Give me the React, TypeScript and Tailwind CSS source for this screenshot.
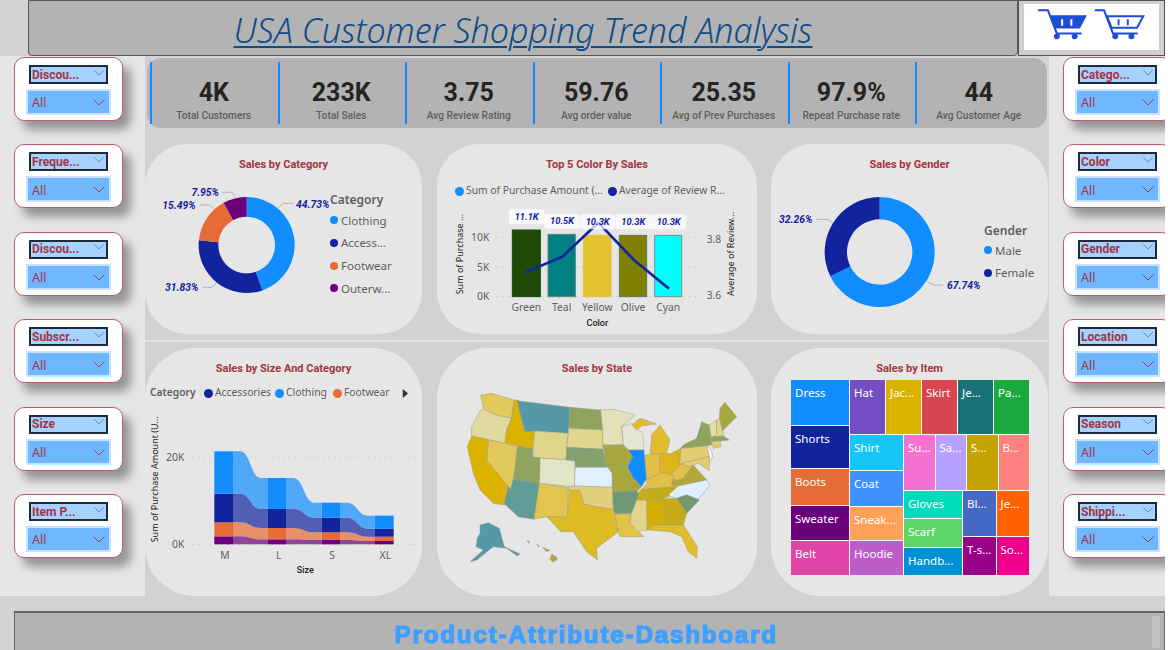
const din = "font-['Roboto',sans-serif]"
const segoe = "font-['Noto_Sans',sans-serif]"

const leftSlicers = ['Discou...', 'Freque...', 'Discou...', 'Subscr...', 'Size', 'Item P...']
const rightSlicers = ['Catego...', 'Color', 'Gender', 'Location', 'Season', 'Shippi...']

const kpis = [
  { value: '4K', label: 'Total Customers' },
  { value: '233K', label: 'Total Sales' },
  { value: '3.75', label: 'Avg Review Rating' },
  { value: '59.76', label: 'Avg order value' },
  { value: '25.35', label: 'Avg of Prev Purchases' },
  { value: '97.9%', label: 'Repeat Purchase rate' },
  { value: '44', label: 'Avg Customer Age' },
]

// donut segment, angles in percent clockwise from 12 o'clock
function arc(cx: number, cy: number, R: number, r: number, from: number, to: number) {
  const a0 = (from / 100) * Math.PI * 2 - Math.PI / 2
  const a1 = (to / 100) * Math.PI * 2 - Math.PI / 2
  const large = to - from > 50 ? 1 : 0
  const p = (rad: number, a: number) => `${cx + rad * Math.cos(a)} ${cy + rad * Math.sin(a)}`
  return `M${p(R, a0)} A${R} ${R} 0 ${large} 1 ${p(R, a1)} L${p(r, a1)} A${r} ${r} 0 ${large} 0 ${p(r, a0)} Z`
}

function Chevron({ className }: { className: string }) {
  return (
    <svg viewBox="0 0 12 7" className={className}>
      <path d="M0.5 0.5 L6 6 L11.5 0.5" fill="none" stroke="currentColor" strokeWidth="0.9" />
    </svg>
  )
}

function Slicer({ name }: { name: string }) {
  return (
    <div className="w-[109px] h-[64px] shrink-0 bg-white border border-[#b9606b] rounded-[10px] shadow-[8px_9px_10px_rgba(0,0,0,0.35)] flex flex-col items-center">
      <div className="w-[79px] h-[19px] mt-[7px] bg-[#a6d2ff] border-2 border-[#1f2a3a] flex items-center justify-between pl-px pr-[2px]">
        <span className={`${din} text-[12px] leading-none font-bold text-[#a4343f]`}>{name}</span>
        <Chevron className="w-[10px] h-[6px] text-[#5f6b78] -mt-[4px]" />
      </div>
      <div className="w-[85px] h-[26px] mt-[5px] bg-[#6fb8ff] border-2 border-[#c9e2ff] flex items-center justify-between pl-[4px] pr-[4px]">
        <span className={`${segoe} text-[12.5px] leading-none text-[#a4343f] mt-[3px]`}>All</span>
        <Chevron className="w-[12px] h-[7px] text-[#a4343f] mt-[1px]" />
      </div>
    </div>
  )
}

function Title({ children }: { children: string }) {
  return (
    <div className={`${din} h-[31px] pt-[15px] text-center text-[11px] leading-[12px] font-bold text-[#a4343f]`}>
      {children}
    </div>
  )
}

function LegendDot({ color, label }: { color: string; label: string }) {
  return (
    <div className="h-[22.7px] flex items-center gap-[3px]">
      <span className={`w-[8px] h-[8px] rounded-full ${color}`} />
      <span className={`${segoe} text-[11.5px] text-[#605e5c]`}>{label}</span>
    </div>
  )
}

function CartLogo() {
  return (
    <svg viewBox="765 15 340 100" className="w-[113px] h-[33px]">
      <g fill="none" stroke="#1c4fd6" strokeWidth="6">
        <path d="M773 25 H803 L830 95 H905" />
        <path d="M945 25 H973 L1000 95 H1075" />
        <path d="M982 43 H1092 L1073 78 H996 Z" />
      </g>
      <path d="M808 40 H921 L900 80 H824 Z" fill="#1c4fd6" />
      <g stroke="#fff" strokeWidth="6">
        <path d="M846 52 V72 M874 52 V72" />
      </g>
      <g stroke="#1c4fd6" strokeWidth="6">
        <path d="M1017 52 V70 M1045 52 V70" />
      </g>
      <g fill="#1c4fd6">
        <circle cx="830" cy="104" r="9" />
        <circle cx="884" cy="104" r="9" />
        <circle cx="1007" cy="104" r="9" />
        <circle cx="1056" cy="104" r="9" />
      </g>
    </svg>
  )
}

function CategoryDonut() {
  const labelClass = `${din} text-[31px] font-bold italic fill-[#12239e]`
  return (
    <svg viewBox="0 105 555 477" className="w-[185px] h-[159px] shrink-0">
      <path d={arc(305, 315, 144, 85, 0, 44.73)} fill="#118dff" />
      <path d={arc(305, 315, 144, 85, 44.73, 76.56)} fill="#12239e" />
      <path d={arc(305, 315, 144, 85, 76.56, 92.05)} fill="#e66c37" />
      <path d={arc(305, 315, 144, 85, 92.05, 100)} fill="#6b007b" />
      <g fill="none" stroke="#b5b5b5" strokeWidth="3">
        <path d="M400 203 L415 190 H445" />
        <path d="M232 157 H262 L270 172" />
        <path d="M163 195 H195 L207 207" />
        <path d="M172 442 H200 L213 430" />
      </g>
      <text x="453" y="203" className={labelClass}>44.73%</text>
      <text x="222" y="167" textAnchor="end" className={labelClass}>7.95%</text>
      <text x="152" y="207" textAnchor="end" className={labelClass}>15.49%</text>
      <text x="160" y="452" textAnchor="end" className={labelClass}>31.83%</text>
    </svg>
  )
}

function GenderDonut() {
  const labelClass = `${din} text-[31px] font-bold italic fill-[#12239e]`
  return (
    <svg viewBox="9 105 630 477" className="w-[210px] h-[159px] shrink-0">
      <path d={arc(335, 336, 165, 98, 0, 67.74)} fill="#118dff" />
      <path d={arc(335, 336, 165, 98, 67.74, 100)} fill="#12239e" />
      <g fill="none" stroke="#b5b5b5" strokeWidth="3">
        <path d="M145 238 H180 L195 250" />
        <path d="M478 425 L495 435 H525" />
      </g>
      <text x="133" y="248" textAnchor="end" className={labelClass}>32.26%</text>
      <text x="537" y="447" className={labelClass}>67.74%</text>
    </svg>
  )
}

const bars = [
  { name: 'Green', x: 232, w: 84, top: 270, fill: '#1f4a05', stroke: '#1f4a05', value: '11.1K', lx: 275, ly: 230 },
  { name: 'Teal', x: 339, w: 82, top: 283, fill: '#008080', stroke: '#6f7f7f', value: '10.5K', lx: 381, ly: 243 },
  { name: 'Yellow', x: 446, w: 82, top: 286, fill: '#e3c130', stroke: '#e3c130', value: '10.3K', lx: 488, ly: 245 },
  { name: 'Olive', x: 553, w: 82, top: 286, fill: '#808000', stroke: '#6f6f5f', value: '10.3K', lx: 595, ly: 245 },
  { name: 'Cyan', x: 659, w: 81, top: 286, fill: '#00ffff', stroke: '#6f8f8f', value: '10.3K', lx: 701, ly: 245 },
]

function ColorChart() {
  const tick = `${segoe} text-[31px] fill-[#605e5c]`
  return (
    <svg viewBox="6 171 960 411" className="w-[320px] h-[137px]">
      <g stroke="#bdbdbd" strokeWidth="3" strokeDasharray="3 14">
        <path d="M185 292 H790 M185 381 H790 M185 470 H790" />
      </g>
      <text x="163" y="303" textAnchor="end" className={tick}>10K</text>
      <text x="163" y="392" textAnchor="end" className={tick}>5K</text>
      <text x="163" y="480" textAnchor="end" className={tick}>0K</text>
      <text x="815" y="308" className={tick}>3.8</text>
      <text x="815" y="478" className={tick}>3.6</text>
      <text transform="translate(84 463) rotate(-90)" className={`${segoe} text-[27px] fill-[#252423]`}>Sum of Purchase ...</text>
      <text transform="translate(897 468) rotate(-90)" className={`${segoe} text-[27px] fill-[#252423]`}>Average of Review...</text>
      {bars.map((b) => (
        <g key={b.name}>
          <rect x={b.x} y={b.top} width={b.w} height={470 - b.top} fill={b.fill} stroke={b.stroke} strokeWidth="3" />
          <text x={b.x + b.w / 2} y="512" textAnchor="middle" className={tick}>{b.name}</text>
        </g>
      ))}
      <polyline points="272,397 382,350 490,248 597,360 702,446" fill="none" stroke="#12239e" strokeWidth="8" />
      {bars.map((b) => (
        <g key={b.value + b.name}>
          <rect x={b.lx - 53} y={b.ly - 22} width="106" height="45" rx="8" fill="#fff" fillOpacity="0.75" />
          <text x={b.lx} y={b.ly + 10} textAnchor="middle" className={`${din} text-[28px] font-bold italic fill-[#12239e]`}>{b.value}</text>
        </g>
      ))}
      <text x="487" y="557" textAnchor="middle" className={`${din} text-[27px] font-medium fill-[#252423]`}>Color</text>
    </svg>
  )
}

const columns = [
  { x0: 208, x1: 264 },
  { x0: 369, x1: 423 },
  { x0: 530, x1: 585 },
  { x0: 690, x1: 746 },
]

// y of every layer boundary at M, L, S, XL
const layers = [
  { color: '#6b007b', top: [574, 583, 585, 588], bottom: [598, 598, 598, 598] },
  { color: '#e66c37', top: [532, 549, 562, 575], bottom: [574, 583, 585, 588] },
  { color: '#12239e', top: [446, 492, 518, 551], bottom: [532, 549, 562, 575] },
  { color: '#118dff', top: [319, 399, 473, 512], bottom: [446, 492, 518, 551] },
]

// flat for a fifth of the span at both ends, s-curve between
function ribbon(x0: number, x1: number, t0: number, t1: number, b0: number, b1: number) {
  const a = x0 + (x1 - x0) * 0.2
  const z = x1 - (x1 - x0) * 0.2
  const m = (x0 + x1) / 2
  return `M${x0} ${t0} H${a} C${m} ${t0} ${m} ${t1} ${z} ${t1} H${x1} V${b1} H${z} C${m} ${b1} ${m} ${b0} ${a} ${b0} H${x0} Z`
}

function SizeChart() {
  const tick = `${segoe} text-[31px] fill-[#605e5c]`
  return (
    <svg viewBox="0 180 831 573" className="w-[277px] h-[191px]">
      <g stroke="#bdbdbd" strokeWidth="3" strokeDasharray="3 14">
        <path d="M143 338 H820 M143 598 H820" />
      </g>
      <text x="118" y="349" textAnchor="end" className={tick}>20K</text>
      <text x="118" y="609" textAnchor="end" className={tick}>0K</text>
      <text transform="translate(40 592) rotate(-90)" className={`${segoe} text-[27px] fill-[#252423]`}>Sum of Purchase Amount (U...</text>
      {layers.map((l) => (
        <g key={l.color} fill={l.color}>
          {columns.map((c, i) => (
            <rect key={c.x0} x={c.x0} y={l.top[i]} width={c.x1 - c.x0} height={l.bottom[i] - l.top[i]} />
          ))}
          {columns.slice(0, 3).map((c, i) => (
            <path
              key={c.x1}
              d={ribbon(c.x1, columns[i + 1].x0, l.top[i], l.top[i + 1], l.bottom[i], l.bottom[i + 1])}
              fillOpacity="0.7"
            />
          ))}
        </g>
      ))}
      {['M', 'L', 'S', 'XL'].map((s, i) => (
        <text key={s} x={[240, 401, 561, 721][i]} y="641" textAnchor="middle" className={tick}>{s}</text>
      ))}
      <text x="481" y="683" textAnchor="middle" className={`${din} text-[27px] font-medium fill-[#252423]`}>Size</text>
    </svg>
  )
}

const states = [
  { f: '#e3c95b', p: '122,135 155,130 222,150 215,205 175,197 130,178' }, // WA
  { f: '#e0d9a0', p: '122,180 130,178 175,197 215,205 200,240 195,280 95,258 95,230' }, // OR
  { f: '#dcb200', p: '222,150 235,150 240,190 255,245 284,243 278,297 195,280 200,240 215,205' }, // ID
  { f: '#5598a8', p: '232,152 390,172 385,250 284,243 255,245 240,190' }, // MT
  { f: '#dfd68c', p: '284,243 385,250 378,330 300,324 278,321' }, // WY
  { f: '#8fa45e', p: '390,172 482,180 488,240 386,235' }, // ND
  { f: '#e0d690', p: '386,235 488,240 488,298 380,292 385,250' }, // SD
  { f: '#83a270', p: '380,292 488,298 502,352 405,352 405,333 378,330' }, // NE
  { f: '#e3e0ba', p: '482,180 520,178 585,195 545,230 550,285 488,285 488,240' }, // MN
  { f: '#e3e6d5', p: '545,230 575,220 608,250 612,300 565,300 550,285' }, // WI
  { f: '#a6a83f', p: '488,285 550,285 565,300 578,320 565,345 500,345' }, // IA
  { f: '#118dff', p: '565,300 612,300 620,385 605,410 580,385 562,350 578,320' }, // IL
  { f: '#a6a83f', p: '500,345 565,345 562,350 580,385 605,410 590,425 518,425 516,370' }, // MO
  { f: '#e0f0ff', p: '405,352 502,352 516,370 516,412 403,408' }, // KS
  { f: '#e3e5c8', p: '300,324 378,330 405,333 403,410 298,400' }, // CO
  { f: '#8fa45e', p: '232,288 278,297 278,321 300,324 298,400 220,388' }, // UT
  { f: '#e3c95b', p: '145,270 195,280 232,288 220,388 212,418 205,410 140,330' }, // NV
  { f: '#dcb200', p: '95,258 145,270 140,330 205,410 195,465 160,460 120,420 100,370 82,290' }, // CA
  { f: '#5f9c96', p: '220,388 298,400 282,508 235,500 192,460 205,410 212,418' }, // AZ
  { f: '#e2c54e', p: '298,400 385,412 382,502 320,500 282,508' }, // NM
  { f: '#deba25', p: '388,420 420,422 432,462 470,470 520,478 525,492 535,545 470,595 472,630 440,605 400,545 362,545 325,505 320,500 382,502' }, // TX
  { f: '#e3d07f', p: '385,412 403,408 516,412 518,425 520,478 470,470 432,462 420,422 388,420' }, // OK
  { f: '#6f9878', p: '518,425 590,423 597,432 575,490 525,492 520,478' }, // AR
  { f: '#e2c346', p: '525,492 572,492 570,520 612,560 540,560 535,545' }, // LA
  { f: '#e3d58c', p: '590,450 620,450 622,540 590,545 570,515 575,490' }, // MS
  { f: '#d3ae05', p: '620,450 668,447 680,525 640,525 625,540 622,540' }, // AL
  { f: '#c5ac18', p: '597,425 605,418 715,408 690,438 668,447 620,450 590,450' }, // TN
  { f: '#e3c146', p: '605,418 620,400 618,390 660,368 695,372 700,385 695,405 715,408' }, // KY
  { f: '#e3c146', p: '614,315 658,312 660,368 618,390 620,385' }, // IN
  { f: '#dfb41b', p: '658,312 695,310 722,295 720,345 695,372 660,368' }, // OH
  { f: '#e1bd2d', p: '635,255 660,225 690,270 680,310 658,312 630,312' }, // MI
  { f: '#e1bd2d', p: '575,225 600,205 650,222 605,228 590,240' }, // MI upper
  { f: '#e3c146', p: '695,372 720,345 725,340 745,350 760,345 730,385 710,392 700,385' }, // WV
  { f: '#b5a83a', p: '695,405 700,385 710,392 730,385 760,345 800,390 715,408' }, // VA
  { f: '#e0f0ff', p: '685,435 715,408 800,390 810,405 775,448 740,435 710,445 690,438' }, // NC
  { f: '#74986f', p: '710,445 740,435 778,450 740,490' }, // SC
  { f: '#c5ac18', p: '668,447 710,445 740,490 730,525 680,525' }, // GA
  { f: '#e1bd2d', p: '625,540 640,525 680,525 730,525 772,590 770,625 745,605 725,560 690,545' }, // FL
  { f: '#e3cd70', p: '722,295 800,287 808,320 725,340 720,345' }, // PA
  { f: '#8fa45e', p: '730,285 770,265 785,215 808,225 815,265 815,285 800,287 722,295' }, // NY
  { f: '#a6a83f', p: '838,205 840,175 855,157 890,200 850,240 848,245' }, // ME
  { f: '#e3dfa8', p: '808,225 830,210 830,255 813,262' }, // VT
  { f: '#e3d58c', p: '830,210 838,205 848,245 850,258 813,262 830,255' }, // NH
  { f: '#8fa45e', p: '813,262 850,258 868,270 815,275' }, // MA
  { f: '#e3cd70', p: '815,275 840,272 842,290 820,295' }, // CT
  { f: '#f2f4f0', p: '800,287 815,300 818,320 808,340 808,320' }, // NJ
  { f: '#e3cd70', p: '725,340 808,320 808,362 790,350 775,340 760,345 745,350' }, // MD
  { f: '#5598a8', p: '120,525 145,518 178,535 193,590 240,612 232,618 200,595 160,590 110,630 90,635 130,600 108,590 112,565 120,550' }, // AK
  { f: '#b5a83a', p: '335,612 348,620 352,628 338,636 330,628' }, // HI
  { f: '#b5a83a', p: '262,572 270,575 266,580' },
  { f: '#b5a83a', p: '290,584 298,586 296,592' },
  { f: '#b5a83a', p: '308,592 330,602 318,604' },
]

function StateMap() {
  return (
    <svg viewBox="-9 87 960 651" className="w-[320px] h-[217px]">
      {states.map((s) => (
        <polygon key={s.p} points={s.p} fill={s.f} stroke="#9a9a88" strokeWidth="1.5" strokeLinejoin="round" />
      ))}
    </svg>
  )
}

function Tile({ name, className }: { name: string; className: string }) {
  return (
    <div className={`${segoe} text-[11.5px] leading-[14px] text-white pl-[4px] pt-[6px] overflow-hidden ${className}`}>
      {name}
    </div>
  )
}

function Treemap() {
  return (
    <div className="ml-[20px] mt-px w-[238px] h-[195px] flex gap-px bg-white">
      <div className="w-[58px] flex flex-col gap-px">
        <Tile name="Dress" className="h-[45px] bg-[#118dff]" />
        <Tile name="Shorts" className="h-[42px] bg-[#12239e]" />
        <Tile name="Boots" className="h-[36px] bg-[#e66c37]" />
        <Tile name="Sweater" className="h-[34px] bg-[#6b007b]" />
        <Tile name="Belt" className="flex-1 bg-[#e044a7]" />
      </div>
      <div className="flex-1 flex flex-col gap-px">
        <div className="h-[54px] flex gap-px">
          <Tile name="Hat" className="flex-1 bg-[#744ec2]" />
          <Tile name="Jac..." className="flex-1 bg-[#d9b300]" />
          <Tile name="Skirt" className="flex-1 bg-[#d64550]" />
          <Tile name="Je..." className="flex-1 bg-[#197278]" />
          <Tile name="Pa..." className="flex-1 bg-[#1aab40]" />
        </div>
        <div className="flex-1 flex gap-px">
          <div className="w-[53px] flex flex-col gap-px">
            <Tile name="Shirt" className="h-[35px] bg-[#15c6f4]" />
            <Tile name="Coat" className="h-[35px] bg-[#4092ff]" />
            <Tile name="Sneak..." className="h-[33px] bg-[#ffa058]" />
            <Tile name="Hoodie" className="flex-1 bg-[#be5dc9]" />
          </div>
          <div className="flex-1 flex flex-col gap-px">
            <div className="h-[55px] flex gap-px">
              <Tile name="Su..." className="flex-1 bg-[#f472d0]" />
              <Tile name="Sa..." className="flex-1 bg-[#b5a1ff]" />
              <Tile name="S..." className="flex-1 bg-[#c4a200]" />
              <Tile name="B..." className="flex-1 bg-[#ff8080]" />
            </div>
            <div className="flex-1 flex gap-px">
              <div className="w-[58px] flex flex-col gap-px">
                <Tile name="Gloves" className="h-[27px] bg-[#00dbbc]" />
                <Tile name="Scarf" className="h-[28px] bg-[#5bd667]" />
                <Tile name="Handb..." className="flex-1 bg-[#0091d5]" />
              </div>
              <div className="flex-1 flex flex-col gap-px">
                <div className="h-[45px] flex gap-px">
                  <Tile name="Bl..." className="flex-1 bg-[#4668c5]" />
                  <Tile name="Je..." className="flex-1 bg-[#ff6300]" />
                </div>
                <div className="flex-1 flex gap-px">
                  <Tile name="T-s..." className="flex-1 bg-[#99008a]" />
                  <Tile name="So..." className="flex-1 bg-[#ec008c]" />
                </div>
              </div>
            </div>
          </div>
        </div>
      </div>
    </div>
  )
}

export default function App() {
  return (
    <div className="w-[1168px] h-[650px] bg-white overflow-hidden">
      <div className="w-[1165px] h-full flex flex-col bg-[#d2d2d2]">
        {/* Header */}
        <header className="h-[56px] shrink-0 flex pl-[28px]">
          <div className="w-[990px] h-[56px] bg-[#b3b3b3] border border-[#555] rounded-b-[4px] flex items-center justify-center pt-[3px]">
            <h1 className={`${segoe} text-[34px] font-light italic underline decoration-2 underline-offset-[3px] text-[#0e4c8a] leading-none`}>
              USA Customer Shopping Trend Analysis
            </h1>
          </div>
          <div className="flex-1 h-[56px] border border-[#555] bg-[#cfcfcf] pt-[3px] px-[5px] pb-[5px]">
            <div className="h-full bg-white pt-[3px] pl-[11px]">
              <CartLogo />
            </div>
          </div>
        </header>

        <div className="h-[540px] shrink-0 flex">
          {/* Left slicers */}
          <aside className="w-[145px] shrink-0 bg-[#e6e6e6] pl-[14px] pt-px flex flex-col gap-[23.45px]">
            {leftSlicers.map((name, i) => (
              <Slicer key={name + i} name={name} />
            ))}
          </aside>

          {/* Center */}
          <main className="w-[904px] shrink-0">
            <div className="ml-[2px] mt-px w-[901px] h-[71px] bg-[#b3b3b3] border-t border-r border-[#d8d8d8] rounded-[14px] pl-[3px] py-[4px] flex">
              {kpis.map((k) => (
                <div key={k.label} className="w-[127.5px] h-full border-l-2 border-[#118dff] pr-[2px] flex flex-col items-center">
                  <div className={`${din} mt-[17px] text-[25px] leading-[28px] font-bold text-[#252423]`}>{k.value}</div>
                  <div className={`${din} mt-[2px] text-[10.2px] leading-[14px] font-medium text-[#605e5c]`}>{k.label}</div>
                </div>
              ))}
            </div>

            <div className="mt-[16px] h-[190px] flex gap-[15px]">
              <section className="w-[277px] bg-[#e6e6e6] rounded-[42px]">
                <Title>Sales by Category</Title>
                <div className="flex">
                  <CategoryDonut />
                  <div className="mt-[18px]">
                    <div className={`${segoe} text-[12px] leading-[14px] font-semibold text-[#605e5c] mb-[2px]`}>Category</div>
                    <LegendDot color="bg-[#118dff]" label="Clothing" />
                    <LegendDot color="bg-[#12239e]" label="Access..." />
                    <LegendDot color="bg-[#e66c37]" label="Footwear" />
                    <LegendDot color="bg-[#6b007b]" label="Outerw..." />
                  </div>
                </div>
              </section>
              <section className="w-[320px] bg-[#e6e6e6] rounded-[42px]">
                <Title>Top 5 Color By Sales</Title>
                <div className={`${segoe} mt-[9px] -mb-px h-[14px] pl-[18px] flex items-center text-[10.3px] text-[#605e5c]`}>
                  <span className="w-[9px] h-[9px] rounded-full bg-[#118dff] mr-[2px]" />
                  <span className="w-[142px]">Sum of Purchase Amount (...</span>
                  <span className="w-[9px] h-[9px] rounded-full bg-[#12239e] mr-[2px]" />
                  <span>Average of Review R...</span>
                </div>
                <ColorChart />
              </section>
              <section className="w-[277px] -ml-px bg-[#e6e6e6] rounded-[42px]">
                <Title>Sales by Gender</Title>
                <div className="flex">
                  <GenderDonut />
                  <div className="mt-[49px] ml-[3px]">
                    <div className={`${segoe} text-[12px] leading-[14px] font-semibold text-[#605e5c] mb-[1px]`}>Gender</div>
                    <LegendDot color="bg-[#118dff]" label="Male" />
                    <LegendDot color="bg-[#12239e]" label="Female" />
                  </div>
                </div>
              </section>
            </div>

            <div className="h-[2px] my-[6px] bg-[#e3e3e3]" />

            <div className="h-[248px] flex gap-[15px]">
              <section className="w-[277px] bg-[#e6e6e6] rounded-[50px] overflow-hidden">
                <Title>Sales by Size And Category</Title>
                <div className={`${segoe} mt-[2px] h-[24px] pl-[5px] flex items-center text-[10.3px] text-[#605e5c]`}>
                  <span className="w-[54px] font-semibold">Category</span>
                  <span className="w-[9px] h-[9px] rounded-full bg-[#12239e] mr-[2px]" />
                  <span className="w-[60px]">Accessories</span>
                  <span className="w-[9px] h-[9px] rounded-full bg-[#118dff] mr-[2px]" />
                  <span className="w-[47px]">Clothing</span>
                  <span className="w-[9px] h-[9px] rounded-full bg-[#e66c37] mr-[2px]" />
                  <span className="w-[58px]">Footwear</span>
                  <svg viewBox="0 0 8 12" className="w-[6px] h-[11px]">
                    <path d="M1 0 L8 6 L1 12 Z" fill="#333" />
                  </svg>
                </div>
                <SizeChart />
              </section>
              <section className="w-[320px] bg-[#e6e6e6] rounded-[50px] overflow-hidden">
                <Title>Sales by State</Title>
                <StateMap />
              </section>
              <section className="w-[277px] -ml-px bg-[#e6e6e6] rounded-[50px] overflow-hidden">
                <Title>Sales by Item</Title>
                <Treemap />
              </section>
            </div>
          </main>

          {/* Right slicers */}
          <aside className="flex-1 bg-[#e6e6e6] pl-[14px] pt-px flex flex-col gap-[23.45px] overflow-hidden">
            {rightSlicers.map((name) => (
              <Slicer key={name} name={name} />
            ))}
          </aside>
        </div>

        {/* Footer */}
        <footer className="flex-1 pt-[15px] pl-[14px]">
          <div className="relative h-[45px] bg-[#b3b3b3] border-t-2 border-l border-r border-[#666] pt-[8px] pr-[7px] text-center">
            <span className="font-['Liberation_Sans',sans-serif] text-[24px] leading-[28px] font-bold tracking-[1.9px] text-[#3f9fff] [-webkit-text-stroke:1.2px_#3f9fff]">
              Product-Attribute-Dashboard
            </span>
            <div className="absolute right-[4px] top-[3px] w-[8px] h-[32px] bg-[#c0c0c0]" />
          </div>
        </footer>
      </div>
    </div>
  )
}
